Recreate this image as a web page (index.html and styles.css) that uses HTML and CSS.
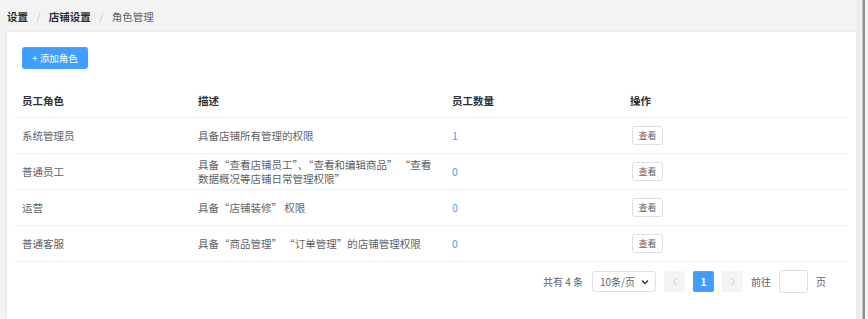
FILE: index.html
```html
<!DOCTYPE html>
<html lang="zh-cn">
<head>
  <meta charset="UTF-8" />
  <meta name="viewport" content="width=device-width, initial-scale=1.0" />
  <title>角色管理</title>
  <link rel="stylesheet" href="styles.css">
</head>
<body>
  <div class="main">
    <div class="breadcrumb">
      <span class="crumb">设置</span>
      <span class="sep">/</span>
      <span class="crumb">店铺设置</span>
      <span class="sep">/</span>
      <span class="crumb current">角色管理</span>
    </div>

    <div class="card">
      <button class="btn-primary"><span class="plus">+</span>添加角色</button>

      <table>
        <colgroup>
          <col class="col-role">
          <col class="col-desc">
          <col class="col-count">
          <col>
        </colgroup>
        <thead>
          <tr>
            <th>员工角色</th>
            <th>描述</th>
            <th>员工数量</th>
            <th>操作</th>
          </tr>
        </thead>
        <tbody>
          <tr>
            <td>系统管理员</td>
            <td>具备店铺所有管理的权限</td>
            <td class="count">1</td>
            <td><button class="btn-small">查看</button></td>
          </tr>
          <tr>
            <td>普通员工</td>
            <td>具备“查看店铺员工”、“查看和编辑商品” “查看数据概况等店铺日常管理权限”</td>
            <td class="count">0</td>
            <td><button class="btn-small">查看</button></td>
          </tr>
          <tr>
            <td>运营</td>
            <td>具备“店铺装修” 权限</td>
            <td class="count">0</td>
            <td><button class="btn-small">查看</button></td>
          </tr>
          <tr>
            <td>普通客服</td>
            <td>具备“商品管理” “订单管理”的店铺管理权限</td>
            <td class="count">0</td>
            <td><button class="btn-small">查看</button></td>
          </tr>
        </tbody>
      </table>

      <div class="pagination">
        <span class="total">共有 4 条</span>
        <div class="size-select">
          <span>10条/页</span>
          <svg width="8" height="6" viewBox="0 0 8 6"><path d="M1 1.5 L4 4.5 L7 1.5" fill="none" stroke="#333" stroke-width="1.4"/></svg>
        </div>
        <button class="page-nav">
          <svg width="6" height="9" viewBox="0 0 6 9"><path d="M4.5 1 L1.5 4.5 L4.5 8" fill="none" stroke="#c0c4cc" stroke-width="1"/></svg>
        </button>
        <button class="page-num">1</button>
        <button class="page-nav">
          <svg width="6" height="9" viewBox="0 0 6 9"><path d="M1.5 1 L4.5 4.5 L1.5 8" fill="none" stroke="#c0c4cc" stroke-width="1"/></svg>
        </button>
        <span class="goto">前往</span>
        <div class="goto-input"></div>
        <span class="goto">页</span>
      </div>
    </div>
  </div>
  <div class="scrollbar"></div>
</body>
</html>
```

FILE: styles.css
```css
body {
  margin: 0;
  display: flex;
  height: 319px;
  overflow: hidden;
  background: #f3f3f3;
  font-family: "Noto Sans CJK SC", "Noto Sans", sans-serif;
  color: #606266;
}

.main {
  width: 857px;
}

.breadcrumb {
  padding: 11px 7px 9px;
  line-height: 12px;
  font-size: 10.5px;
}

.crumb {
  font-weight: bold;
  color: #303133;
}

.crumb.current {
  font-weight: normal;
  color: #606266;
}

.sep {
  color: #c0c4cc;
  margin: 0 6px;
}

.card {
  margin-left: 7px;
  width: 833px;
  height: 257px;
  padding: 15px 8px 15px;
  background: #fff;
  box-shadow: 0 0 4px rgba(0, 0, 0, 0.08);
}

.btn-primary {
  display: block;
  margin-left: 7px;
  width: 66px;
  height: 22px;
  padding: 0;
  border: none;
  border-radius: 3px;
  background: #409eff;
  color: #fff;
  font-family: inherit;
  font-size: 9.5px;
}

.plus {
  margin-right: 2px;
}

table {
  margin-top: 16px;
  width: 100%;
  border-collapse: collapse;
  table-layout: fixed;
  font-size: 10.5px;
}

.col-role {
  width: 176px;
}

.col-desc {
  width: 254px;
}

.col-count {
  width: 178px;
}

th, td {
  padding: 0 7px;
  text-align: left;
  border-bottom: 1px solid #ebeef5;
  line-height: 14px;
}

th {
  height: 32px;
  color: #303133;
  font-weight: bold;
}

td {
  height: 35px;
}

.count {
  color: #409eff;
}

.btn-small {
  display: block;
  width: 31px;
  height: 19px;
  padding: 0;
  margin-left: 2px;
  border: 1px solid #dcdfe6;
  border-radius: 3px;
  background: #fff;
  color: #606266;
  font-family: inherit;
  font-size: 9px;
}

.pagination {
  display: flex;
  justify-content: flex-end;
  align-items: center;
  gap: 8px;
  margin-top: 8px;
  padding-right: 22px;
  font-size: 10px;
  color: #606266;
}

.total {
  margin-right: 1px;
}

.size-select {
  width: 64px;
  height: 21px;
  box-sizing: border-box;
  border: 1px solid #dcdfe6;
  border-radius: 3px;
  display: flex;
  align-items: center;
  justify-content: space-between;
  padding: 0 6px 0 7px;
  font-size: 10px;
}

.page-nav, .page-num {
  width: 21px;
  height: 21px;
  padding: 0;
  border: none;
  border-radius: 2px;
  display: flex;
  align-items: center;
  justify-content: center;
  font-family: inherit;
}

.page-nav {
  background: #f4f4f5;
}

.page-num {
  background: #409eff;
  color: #fff;
  font-weight: bold;
  font-size: 10px;
}

.goto-input {
  width: 29px;
  height: 23px;
  box-sizing: border-box;
  border: 1px solid #dcdfe6;
  border-radius: 3px;
  background: #fff;
}

.scrollbar {
  flex: 1;
  background: linear-gradient(to right, #e9e9e9 0, #f1f1f1 5px, #8f8f8f 6px, #8f8f8f 8px, #f4f4f4 8px);
}
```
